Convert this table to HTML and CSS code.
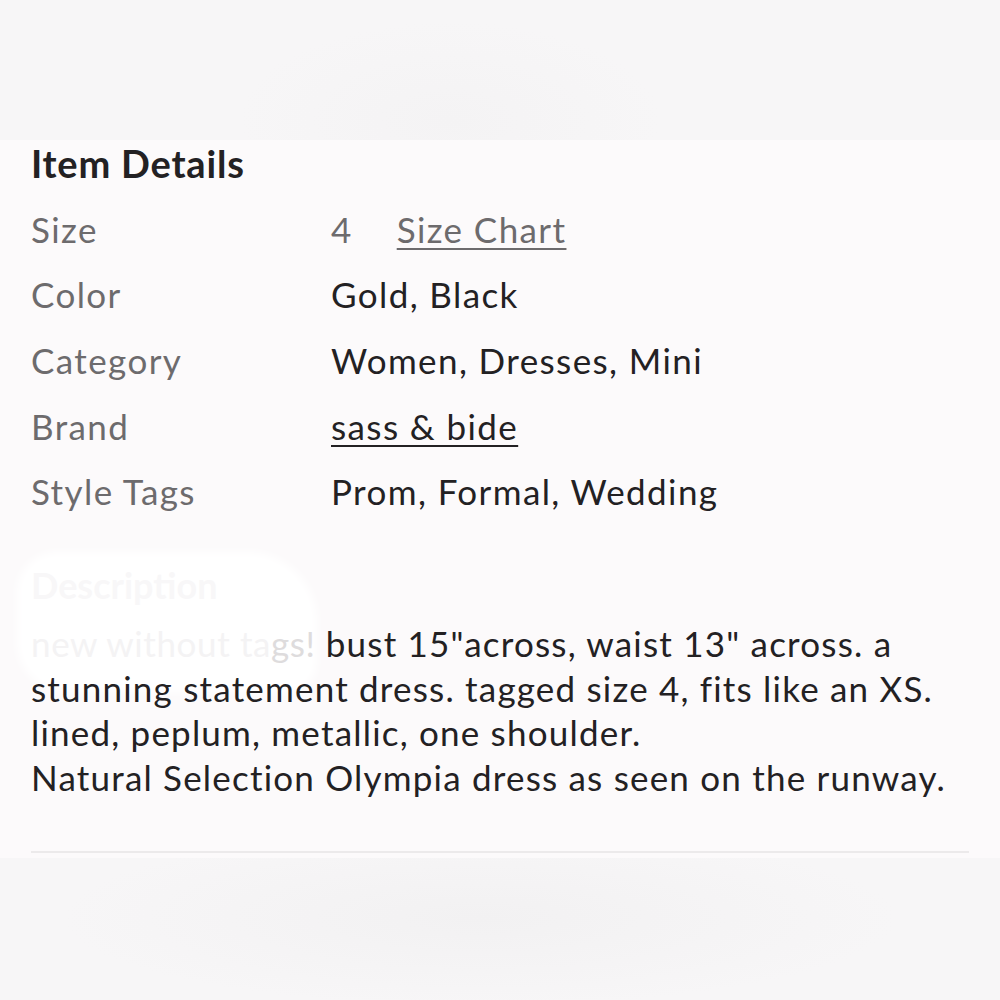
FILE: index.html
```html
<!DOCTYPE html>
<html>
<head>
<meta charset="utf-8">
<link rel="stylesheet" href="styles.css">
</head>
<body>
<div class="blur-top"></div>
<main class="panel">
  <h2 class="heading">Item Details</h2>
  <dl class="details">
    <div class="row"><dt>Size</dt><dd><span class="muted">4</span><a class="link muted">Size Chart</a></dd></div>
    <div class="row"><dt>Color</dt><dd>Gold, Black</dd></div>
    <div class="row"><dt>Category</dt><dd>Women, Dresses, Mini</dd></div>
    <div class="row"><dt>Brand</dt><dd><a class="link">sass &amp; bide</a></dd></div>
    <div class="row"><dt>Style Tags</dt><dd>Prom, Formal, Wedding</dd></div>
  </dl>
  <section class="desc">
    <div class="mask"></div>
    <h3 class="desc-title">Description</h3>
    <p class="desc-text"><span class="faded">new without ta</span><span class="half">gs!</span> bust 15"across, waist 13" across. a stunning statement dress. tagged size 4, fits like an XS.<br>lined, peplum, metallic, one shoulder.<br>Natural Selection Olympia dress as seen on the runway.</p>
  </section>
  <hr class="divider">
</main>
<div class="blur-bottom"></div>
</body>
</html>
```
FILE: styles.css
```css
* { box-sizing: border-box; }
html, body { margin: 0; padding: 0; }
body {
  width: 1000px;
  height: 1000px;
  overflow: hidden;
  background: #f7f6f7;
  font-family: Lato, "Noto Sans", sans-serif;
  color: #232123;
}
.blur-top {
  height: 140px;
  background: radial-gradient(ellipse 300px 140px at 450px 120px, #f4f3f4, rgba(247,246,247,0) 70%), #f7f6f7;
}
.panel {
  background: #fcfafb;
  height: 718px;
  padding: 0 31px 0 31px;
  display: flex;
  flex-direction: column;
}
.heading {
  margin: 0;
  font-size: 38px;
  font-weight: 700;
  color: #232123;
  line-height: 46px;
  letter-spacing: 0.8px;
}
.details { margin: 10px 0 0; }
.row {
  display: grid;
  grid-template-columns: 300px 1fr;
  height: 65.6px;
  align-items: center;
  font-size: 35px;
  letter-spacing: 1.4px;
}
.row dt { color: #6d6b6d; }
.row dd { margin: 0; color: #232123; display: flex; gap: 44px; }
.muted { color: #6d6b6d; }
.link { text-decoration: underline; text-underline-offset: 5px; text-decoration-thickness: 2px; }
.desc { position: relative; margin-top: 38px; }
.mask {
  position: absolute;
  left: -14px;
  top: -10px;
  width: 300px;
  height: 140px;
  background: #ffffff;
  border-radius: 40px 70px 30px 50px;
  filter: blur(5px);
}
.desc-title {
  position: relative;
  margin: 0;
  font-size: 36px;
  font-weight: 700;
  line-height: 46px;
  color: #f8f7f8;
}
.desc-text {
  position: relative;
  margin: 13px 0 0;
  font-size: 35px;
  line-height: 44.7px;
  letter-spacing: 1.2px;
  color: #232123;
}
.faded { color: #f4f3f4; letter-spacing: 0.6px; }
.half { color: #dedcdd; letter-spacing: 0.6px; }
.divider {
  margin: auto 0 5px;
  border: 0;
  height: 2px;
  background: #eceaeb;
}
.blur-bottom {
  height: 142px;
  background: radial-gradient(ellipse 520px 110px at 480px 60px, #f2f1f2, rgba(247,246,247,0) 80%), #f7f6f7;
}
```
